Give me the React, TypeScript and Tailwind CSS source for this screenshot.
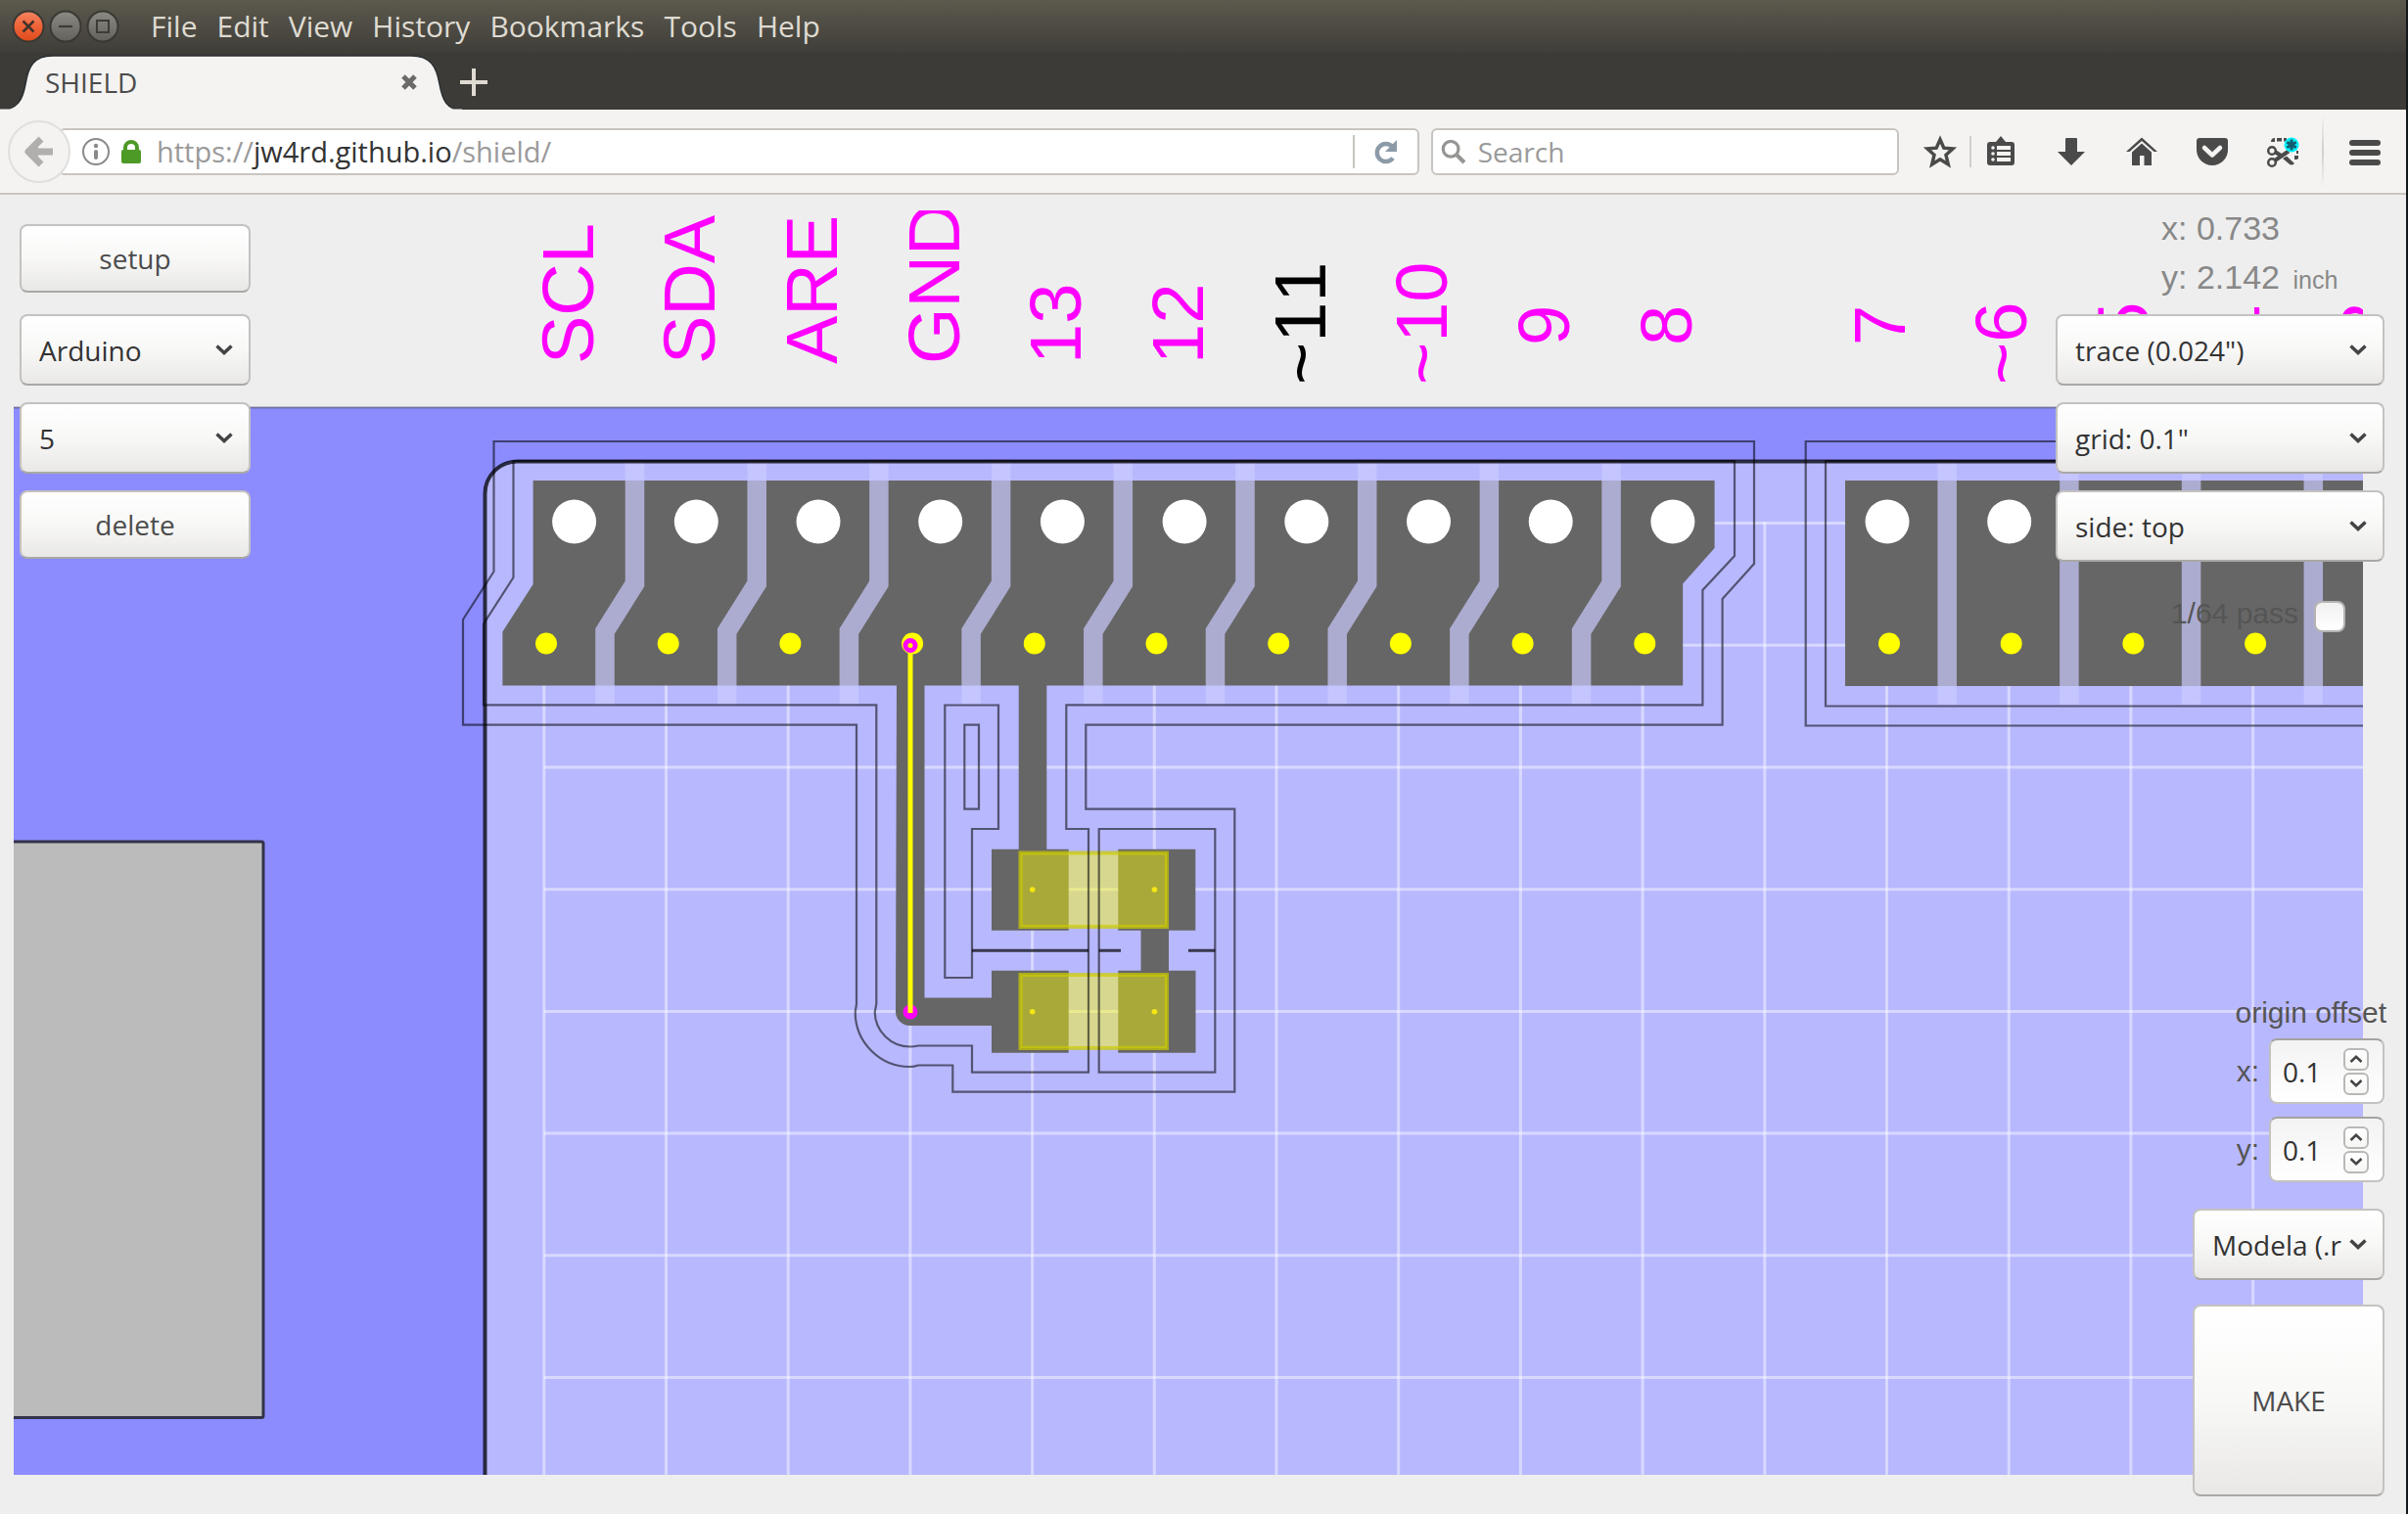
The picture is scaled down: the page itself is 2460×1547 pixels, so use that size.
import React, { useState } from "react";

const PITCH = 124.7;

const UI_FONT = "font-['Open_Sans','Noto_Sans',sans-serif]";
const PAGE_FONT = "font-['Liberation_Sans',Arial,sans-serif]";

const RAISED =
  "rounded-lg border-2 border-[#c4c2c0] border-b-[#a9a8a6] bg-linear-to-b from-white via-[#f8f8f7] to-[#e9e8e6]";

/* ---------- window chrome ---------- */

function TitleBar() {
  const menus = ["File", "Edit", "View", "History", "Bookmarks", "Tools", "Help"];
  return (
    <div className="flex h-[54px] items-center bg-linear-to-b from-[#5c594d] to-[#3f3e39] pl-3">
      <div className="flex gap-1">
        <button aria-label="Close window" className="size-[34px]">
          <svg viewBox="0 0 34 34" className="size-full">
            <defs>
              <linearGradient id="closeFill" x1="0" y1="0" x2="0" y2="1">
                <stop offset="0" stopColor="#f58463" />
                <stop offset="0.5" stopColor="#ee6337" />
                <stop offset="1" stopColor="#de4a1b" />
              </linearGradient>
            </defs>
            <circle cx="17" cy="17" r="15.5" fill="url(#closeFill)" stroke="#3a3833" strokeWidth="2" />
            <path d="M11.500 11.500l11 11M22.500 11.500l-11 11" stroke="#40332b" strokeWidth="2.500" />
          </svg>
        </button>
        <button aria-label="Minimize window" className="size-[34px]">
          <svg viewBox="0 0 34 34" className="size-full">
            <defs>
              <linearGradient id="greyFill" x1="0" y1="0" x2="0" y2="1">
                <stop offset="0" stopColor="#8b8a83" />
                <stop offset="1" stopColor="#62615b" />
              </linearGradient>
            </defs>
            <circle cx="17" cy="17" r="15.500" fill="url(#greyFill)" stroke="#3a3833" strokeWidth="2" />
            <path d="M10 17h14" stroke="#3c3b37" strokeWidth="2.200" />
          </svg>
        </button>
        <button aria-label="Maximize window" className="size-[34px]">
          <svg viewBox="0 0 34 34" className="size-full">
            <circle cx="17" cy="17" r="15.500" fill="url(#greyFill)" stroke="#3a3833" strokeWidth="2" />
            <rect x="11" y="11" width="12" height="12" fill="none" stroke="#3c3b37" strokeWidth="2" />
          </svg>
        </button>
      </div>
      <nav className="ml-8 flex gap-5 text-3xl leading-9 text-[#dfdbd2] [text-shadow:0_-2px_1px_#33322e]">
        {menus.map((m) => (
          <button key={m} className="leading-9">
            {m}
          </button>
        ))}
      </nav>
    </div>
  );
}

function TabStrip() {
  return (
    <div className="flex h-[58px] items-end bg-[#3c3b37]">
      <div className="relative h-14 w-[472px]">
        <svg viewBox="0 0 472 56" className="absolute inset-0 size-full" aria-hidden="true">
          <path
            d="M0 57C18 56 23 46 26 30C29 12 34 1 54 1H420C440 1 446 12 449 30C452 46 456 56 472 57Z"
            fill="#f4f3f1"
            stroke="#2b2f33"
            strokeWidth="1.500"
          />
          <path d="M0 57H472" stroke="#f4f3f1" strokeWidth="3" />
        </svg>
        <div className="relative flex h-full items-center justify-between pr-[46px] pl-[46px]">
          <span className="text-[28px] leading-9 text-[#4c4c4c]">SHIELD</span>
          <button aria-label="Close tab" className="size-4">
            <svg viewBox="0 0 16 16" className="size-full">
              <path d="M2 2l12 12M14 2L2 14" stroke="#6b6a68" strokeWidth="5" />
            </svg>
          </button>
        </div>
      </div>
      <button aria-label="New tab" className="mb-[14px] flex h-7 w-6 items-center justify-center">
        <svg viewBox="0 0 28 28" className="size-7 shrink-0">
          <path d="M14 0v28M0 14h28" stroke="#dfdbd2" strokeWidth="4" />
        </svg>
      </button>
    </div>
  );
}

function IconButton({ label, children }: { label: string; children: React.ReactNode }) {
  return (
    <button aria-label={label} className="size-8 shrink-0">
      <svg viewBox="0 0 32 32" className="size-full overflow-visible" fill="#4a4a4a">
        {children}
      </svg>
    </button>
  );
}

function NavBar() {
  return (
    <div className="flex h-[87px] items-center border-b-2 border-[#c8c5c1] bg-[#f4f3f1] pl-2">
      <button
        aria-label="Back"
        className="z-10 flex size-16 shrink-0 items-center justify-center rounded-full border-2 border-[#e0dfdd] bg-[#f4f3f1]"
      >
        <svg viewBox="0 0 30 32" className="h-8 w-[30px]">
          <path d="M29 16H7M17 3L4 16L17 29" fill="none" stroke="#b0afad" strokeWidth="7" strokeLinejoin="round" />
          <path d="M1 16L14 5V27Z" fill="#b0afad" />
        </svg>
      </button>
      <div className="-ml-3 flex h-12 flex-1 items-center rounded-md border-2 border-[#c8c5c1] bg-white pl-[22px]">
        <svg viewBox="0 0 28 28" className="size-7" aria-hidden="true">
          <circle cx="14" cy="14" r="13" fill="none" stroke="#8a8a8a" strokeWidth="2" />
          <circle cx="14" cy="8" r="2.200" fill="#8a8a8a" />
          <path d="M14 14v6" stroke="#8a8a8a" strokeWidth="4" strokeLinecap="round" />
        </svg>
        <svg viewBox="0 0 20 24" className="ml-3 h-6 w-5" aria-hidden="true">
          <path d="M4 12V8a6 6 0 0 1 12 0v4" fill="none" stroke="#4d9a26" strokeWidth="4" />
          <rect y="10" width="20" height="14" rx="2" fill="#4d9a26" />
        </svg>
        <div role="textbox" aria-label="Address" className="ml-4 flex-1 text-[29px] leading-9 text-[#9a9a9a]">
          https://<span className="text-[#333]">jw4rd.github.io</span>/shield/
        </div>
        <button aria-label="Reload" className="flex h-[34px] w-[66px] items-center justify-center border-l-2 border-[#c8c5c1]">
          <svg viewBox="0 0 24 26" className="h-[26px] w-6">
            <path d="M19 19.500A9 9 0 1 1 18.500 8" fill="none" stroke="#8c9aa8" strokeWidth="4.500" />
            <path d="M23 1V13H11Z" fill="#8c9aa8" />
          </svg>
        </button>
      </div>
      <label className="ml-3 flex h-12 w-[478px] items-center rounded-md border-2 border-[#c8c5c1] bg-white pl-2">
        <svg viewBox="0 0 28 28" className="size-7" aria-hidden="true">
          <circle cx="11" cy="11" r="8.500" fill="none" stroke="#959593" strokeWidth="3.500" />
          <path d="M17 17l9 9" stroke="#959593" strokeWidth="4.500" />
        </svg>
        <input
          aria-label="Search"
          placeholder="Search"
          className="ml-3 w-full text-[28px] leading-9 outline-none placeholder:text-[#9a9a9a]"
        />
      </label>
      <div className="ml-[26px] flex items-center">
        <IconButton label="Bookmark this page">
          <path
            d="M16 3.500L19.800 12.200L29 13L22 19.300L24.300 29L16 23.800L7.700 29L10 19.300L3 13L12.200 12.200Z"
            fill="none"
            stroke="#4a4a4a"
            strokeWidth="3.500"
          />
        </IconButton>
        <span className="ml-[14px] mr-[14px] h-8 w-0.5 bg-[#d0cfcd]" />
        <IconButton label="Bookmarks">
          <path d="M5 6H11L16 0L21 6H27A3 3 0 0 1 30 9V27A3 3 0 0 1 27 30H5A3 3 0 0 1 2 27V9A3 3 0 0 1 5 6Z" />
          <g fill="#f4f3f1">
            <circle cx="8" cy="12" r="1.800" />
            <circle cx="8" cy="18" r="1.800" />
            <circle cx="8" cy="24" r="1.800" />
            <path d="M12 10h14v4H12zM12 16h14v4H12zM12 22h14v4H12z" />
          </g>
        </IconButton>
        <span className="w-10" />
        <IconButton label="Downloads">
          <path d="M11 2h10a1 1 0 0 1 1 1V16H30L16 30L2 16H10V3a1 1 0 0 1 1-1Z" />
        </IconButton>
        <span className="w-10" />
        <IconButton label="Home">
          <path d="M16 1.500L32 16H28.500L16 5L3.500 16H0Z" />
          <path d="M16 7.500L26 16.500V30H18.500V20H14V30H6V16.500Z" />
        </IconButton>
        <span className="w-10" />
        <IconButton label="Save to Pocket">
          <path d="M3 2H29A3 3 0 0 1 32 5V14A16 16 0 0 1 0 14V5A3 3 0 0 1 3 2Z" />
          <path
            d="M8 12L16 19.500L24 12"
            fill="none"
            stroke="#f4f3f1"
            strokeWidth="4.500"
            strokeLinecap="round"
            strokeLinejoin="round"
          />
        </IconButton>
        <span className="w-10" />
        <IconButton label="Screenshot">
          <path d="M4 6A4 4 0 0 1 8 2V6ZM10 2h5v3.500h-5zM17 2h3v3.500h-3zM28 20h4v3a3 3 0 0 1-3 1h-1zM30 15h2v3h-2z" />
          <circle cx="5" cy="15" r="3.800" fill="none" stroke="#4a4a4a" strokeWidth="2.500" />
          <circle cx="5" cy="27" r="3.800" fill="none" stroke="#4a4a4a" strokeWidth="2.500" />
          <path d="M8 16L15 20.500M8 25L22 15.500" stroke="#4a4a4a" strokeWidth="4" />
          <path d="M16 23L20 20.500L28 28Q25 31 22 28Z" />
          <circle cx="25" cy="9" r="7.500" fill="#00f2ff" />
          <path d="M25 3.500v11M20.300 6.200l9.400 5.500M29.700 6.200l-9.400 5.500" stroke="#145a6e" strokeWidth="3" />
        </IconButton>
        <span className="ml-6 mr-[26px] h-[75px] w-0.5 bg-linear-to-b from-transparent via-[#d0cfcd] to-transparent" />
        <IconButton label="Open menu">
          <rect y="4" width="32" height="6" rx="3" />
          <rect y="14" width="32" height="6" rx="3" />
          <rect y="24" width="32" height="6" rx="3" />
        </IconButton>
      </div>
      <span className="w-[26px] shrink-0" />
    </div>
  );
}

/* ---------- board drawing ---------- */

type PinLabel = { text: string; baseline: number; start: number; black?: boolean };

const upperPins: PinLabel[] = [
  { text: "SCL", start: 372 },
  { text: "SDA", start: 372 },
  { text: "ARE", start: 372 },
  { text: "GND", start: 372 },
  { text: "13", start: 372 },
  { text: "12", start: 372 },
  { text: "~11", start: 393, black: true },
  { text: "~10", start: 393 },
  { text: "9", start: 353 },
  { text: "8", start: 353 },
].map((p, i) => ({ ...p, baseline: 605.500 + i * PITCH }));

const lowerPins: PinLabel[] = [
  { text: "7", start: 353 },
  { text: "~6", start: 393 },
  { text: "~5", start: 393 },
  { text: "4", start: 353 },
  { text: "~3", start: 393 },
].map((p, i) => ({ ...p, baseline: 1945.500 + i * PITCH }));

const range = (n: number) => Array.from({ length: n }, (_, i) => i);

function Board() {
  return (
    <svg viewBox="14 215 2400 1292" className="block h-auto w-full" role="img" aria-label="Shield layout">
      <rect x="14" y="416" width="2400" height="1091" fill="#8c8cff" />
      <path d="M14 416.500H2414" stroke="#5f5f78" strokeOpacity="0.650" strokeWidth="2" />
      <rect x="-10" y="860" width="279" height="588.500" rx="2" fill="#bbbbbb" stroke="#33334a" strokeWidth="3" />
      <path d="M495.500 1520V505A33 33 0 0 1 528.500 471.500H2430V1520Z" fill="#b8b8ff" />

      <g stroke="#ffffff" strokeOpacity="0.450" strokeWidth="3">
        {range(15).map((i) => (
          <path key={i} d={`M${555.8 + i * PITCH} 533V1507`} />
        ))}
        {range(8).map((i) => (
          <path key={i} d={`M556 ${534.6 + i * PITCH}H2414`} />
        ))}
      </g>

      <g fill="#666666">
        <path d="M544.600 491H1751.600V560L1719.200 596.500V700.500H513.400V645.500L544.600 597Z" />
        <rect x="1885" y="491" width="540" height="210" />
        <path d="M916 700H944.500V1019.500H1013V1048H930A14.500 14.500 0 0 1 915 1034Z" />
        <path d="M1040.700 700H1069.300V868H1040.700ZM1165.500 950H1194V992H1165.500Z" />
        <path d="M1013 867.700H1091.700V950.700H1013ZM1142.300 867.700H1221.300V950.700H1142.300Z" />
        <path d="M1013 991.700H1091.700V1075.700H1013ZM1142.300 991.700H1221.500V1075.700H1142.300Z" />
      </g>

      <g fill="none" stroke="#cacaff" strokeOpacity="0.700" strokeWidth="19.500">
        {range(9).map((i) => (
          <path key={i} d={`M${648.5 + i * PITCH} 473v123.500l-30.500 48.500v74.500`} />
        ))}
        {range(4).map((i) => (
          <path key={i} d={`M${1989.2 + i * PITCH} 473v247`} />
        ))}
      </g>

      <g fill="#ffffff">
        {range(10).map((i) => (
          <circle key={i} cx={586.6 + i * PITCH} cy="533" r="22.500" />
        ))}
        {range(4).map((i) => (
          <circle key={i} cx={1928 + i * PITCH} cy="533" r="22.500" />
        ))}
      </g>

      <g fill="#ffff00">
        {range(10).map((i) => (
          <circle key={i} cx={558 + i * PITCH} cy="657.500" r="11" />
        ))}
        {range(4).map((i) => (
          <circle key={i} cx={1930 + i * PITCH} cy="657.500" r="11" />
        ))}
      </g>

      <path
        d="M495.500 1520V505A33 33 0 0 1 528.500 471.500H2430"
        fill="none"
        stroke="#000000"
        strokeOpacity="0.750"
        strokeWidth="4"
      />

      <g fill="#ffff00" fillOpacity="0.440" stroke="#cccc00" strokeOpacity="0.700" strokeWidth="4">
        <rect x="1042.500" y="871.500" width="149.500" height="75.500" />
        <rect x="1042.500" y="996" width="149.500" height="75" />
      </g>
      <g fill="#f5e614">
        {[909, 1033.7].map((y) => (
          <g key={y}>
            <circle cx="1054.700" cy={y} r="2.800" />
            <circle cx="1179.400" cy={y} r="2.800" />
          </g>
        ))}
      </g>

      <g fill="none" stroke="#000000" strokeOpacity="0.550" strokeWidth="2.200">
        <path d="M873.700 1034L875 1026V740.700H473V633L504.500 584V451H1792V576L1759.600 612V740.700H1109.300V826.700H1261.300V1115.700H973.300V1088.500H938Q934 1090 930 1090A56 56 0 0 1 873.700 1034" />
        <path d="M893.700 1034L895.300 1026V720.300H494V637.500L524.500 590V471H1772V568L1739.400 603V720.300H1089.300V847H1112V1095.700H993V1068.500H938Q934 1069.500 930 1069.500A36 36 0 0 1 893.700 1034" />
        <path d="M965.300 720.500H1020V847H993V999H965.300ZM985.300 740.700H1000V826.700H985.300ZM1122.700 847H1241.300V1095.700H1122.700Z" />
        <path d="M2430 741.500H1844.700V451H2430M2430 721.500H1865V471H2430" />
      </g>
      <path
        d="M993 971.300H1112M1122.700 971.300H1145M1214 971.300H1241.300"
        stroke="#000000"
        strokeOpacity="0.700"
        strokeWidth="3"
      />

      <circle cx="930" cy="659.500" r="5" fill="#ffff00" stroke="#ff00ff" strokeWidth="5" />
      <circle cx="930" cy="1034" r="7.500" fill="#ff00ff" />
      <path d="M930 667V1035" stroke="#ffff00" strokeWidth="5" />

      <g className={`[font-kerning:none] ${PAGE_FONT}`} fontSize="74">
        {[...upperPins, ...lowerPins].map((p) => (
          <text
            key={p.text}
            transform={`translate(${p.baseline} ${p.start}) rotate(-90)`}
            fill={p.black ? "#000000" : "#ff00ff"}
          >
            {p.text}
          </text>
        ))}
      </g>
    </svg>
  );
}

/* ---------- page controls ---------- */

function Dropdown({ label, value, tight }: { label: string; value: string; tight?: boolean }) {
  return (
    <div className={`grid h-[73px] items-center ${UI_FONT} ${RAISED}`}>
      <select
        aria-label={label}
        className={
          "col-start-1 row-start-1 h-full w-full appearance-none bg-transparent text-[28px] leading-9 text-[#333] outline-none " +
          (tight ? "pl-[18px]" : "pl-[18px] pr-12")
        }
      >
        <option>{value}</option>
      </select>
      <svg
        viewBox="0 0 18 11"
        className="pointer-events-none col-start-1 row-start-1 mr-4 h-[11px] w-[18px] justify-self-end"
        aria-hidden="true"
      >
        <path d="M1.500 1.500L9 8.500L16.500 1.500" fill="none" stroke="#444" strokeWidth="3.500" />
      </svg>
    </div>
  );
}

function SpinButton({ label, up, onClick }: { label: string; up?: boolean; onClick: () => void }) {
  return (
    <button
      aria-label={label}
      onClick={onClick}
      className="flex h-[23px] w-[26px] items-center justify-center rounded-md border-2 border-[#b9b8b6] bg-linear-to-b from-white to-[#f6f6f5]"
    >
      <svg viewBox="0 0 14 8" className="h-2 w-[14px]">
        <path d={up ? "M1.500 7L7 1.800L12.500 7" : "M1.500 1L7 6.200L12.500 1"} fill="none" stroke="#444" strokeWidth="2.500" />
      </svg>
    </button>
  );
}

function OffsetField({ axis }: { axis: string }) {
  const [value, setValue] = useState("0.1");
  const step = (d: number) => setValue(String(Math.round((Number(value) + d) * 10) / 10));
  return (
    <div className="flex items-center gap-2.5">
      <label htmlFor={`offset-${axis}`} className="text-3xl leading-9 text-[#555]">
        {axis}:
      </label>
      <div className="flex h-[67px] w-[118px] items-center justify-between rounded-lg border-2 border-[#c4c2c0] border-t-[#a4a3a1] bg-linear-to-b from-[#f3f3f3] to-white pr-[14px] pl-3">
        <input
          id={`offset-${axis}`}
          inputMode="decimal"
          value={value}
          onChange={(e) => setValue(e.target.value)}
          className={`w-12 bg-transparent text-[28px] leading-9 text-[#333] outline-none ${UI_FONT}`}
        />
        <div className="flex flex-col gap-0.5">
          <SpinButton label={`Increase ${axis}`} up onClick={() => step(0.1)} />
          <SpinButton label={`Decrease ${axis}`} onClick={() => step(-0.1)} />
        </div>
      </div>
    </div>
  );
}

function Controls() {
  return (
    <div className={`z-10 flex justify-between pr-[22px] pb-[18px] pl-5 [grid-area:1/1] ${PAGE_FONT}`}>
      <div className="mt-[30px] flex w-[236px] flex-col">
        <button className={`h-[70px] text-[28px] leading-9 text-[#4c4c4c] ${UI_FONT} ${RAISED}`}>setup</button>
        <div className="mt-[22px] flex flex-col gap-[17px]">
          <Dropdown label="Board" value="Arduino" />
          <Dropdown label="Count" value="5" />
          <button className={`h-[70px] text-[28px] leading-9 text-[#4c4c4c] ${UI_FONT} ${RAISED}`}>delete</button>
        </div>
      </div>

      <div className="flex w-[336px] flex-col justify-between">
        <div>
          <div className="pt-[9px] pl-[108px] text-[34px] leading-[50px] text-[#888]">
            <p>x: 0.733</p>
            <p>
              y: 2.142 <span className="ml-1 text-[25px]">inch</span>
            </p>
          </div>
          <div className="mt-[10px] flex flex-col gap-[17px]">
            <Dropdown label="Tool" value={'trace (0.024")'} />
            <Dropdown label="Grid" value={'grid: 0.1"'} />
            <Dropdown label="Side" value="side: top" />
          </div>
          <label className="mt-[34px] flex items-center justify-end gap-4 pr-10 text-3xl leading-9 text-[#555]">
            1/64 pass
            <input
              type="checkbox"
              className="mt-1.5 size-8 appearance-none rounded-lg border-2 border-[#b5b4b2] bg-linear-to-b from-[#f1f1f1] to-white"
            />
          </label>
        </div>

        <div className="flex flex-col items-end">
          <p className="-mr-0.5 text-3xl leading-9 whitespace-nowrap text-[#555]">origin offset</p>
          <div className="mt-2 flex flex-col gap-[13px]">
            <OffsetField axis="x" />
            <OffsetField axis="y" />
          </div>
          <div className="mt-[27px] w-[196px]">
            <Dropdown label="Output format" value="Modela (.r" tight />
          </div>
          <button className={`mt-[25px] size-[196px] text-[28px] leading-9 text-[#4c4c4c] ${UI_FONT} ${RAISED}`}>
            MAKE
          </button>
        </div>
      </div>
    </div>
  );
}

export default function App() {
  return (
    <div className="flex min-h-screen flex-col border-r-2 border-[#14191b] bg-[#eeeeee]">
      <header className={UI_FONT}>
        <TitleBar />
        <TabStrip />
        <NavBar />
      </header>
      <main className="grid flex-1">
        <div className="pt-4 pr-11 pb-10 pl-[14px] [grid-area:1/1]">
          <Board />
        </div>
        <Controls />
      </main>
    </div>
  );
}
